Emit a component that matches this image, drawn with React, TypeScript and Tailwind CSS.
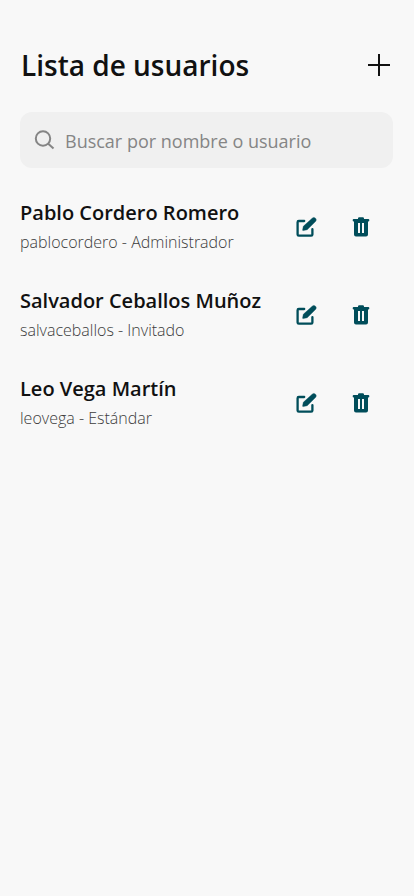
import React, { useState } from "react";

type User = { name: string; username: string; role: string };

const users: User[] = [
  { name: "Pablo Cordero Romero", username: "pablocordero", role: "Administrador" },
  { name: "Salvador Ceballos Muñoz", username: "salvaceballos", role: "Invitado" },
  { name: "Leo Vega Martín", username: "leovega", role: "Estándar" },
];

function EditIcon() {
  return (
    <svg viewBox="0 0 24 24" className="size-6" fill="none" stroke="currentColor" aria-hidden="true">
      <path d="M10.200 6H4.800a1.200 1.200 0 0 0-1.200 1.200v12.200a1.200 1.200 0 0 0 1.200 1.200h12.400a1.200 1.200 0 0 0 1.200-1.200v-5.200" strokeWidth="2.3" strokeLinecap="round" strokeLinejoin="round" />
      <path d="M18.200 3.200a2.400 2.400 0 0 1 3.300 0 2.300 2.300 0 0 1 0 3.300l-8.300 8.200-3.900.9c-.4.100-.8-.3-.7-.7l.7-3.600z" fill="currentColor" stroke="currentColor" strokeWidth=".4" />
    </svg>
  );
}

function TrashIcon() {
  return (
    <svg viewBox="0 0 24 24" className="size-6" fill="currentColor" aria-hidden="true">
      <path fillRule="evenodd" d="M9 4V3.500C9 2.700 9.700 2.200 10.500 2.200h3c.8 0 1.500.500 1.500 1.300V4h4.300a1 1 0 0 1 1 1v.500a1 1 0 0 1-1 1H19v13a2 2 0 0 1-2 2H7a2 2 0 0 1-2-2v-13h-.3a1 1 0 0 1-1-1V5a1 1 0 0 1 1-1zM9 8v10h2V8zM13 8v10h2V8z" />
    </svg>
  );
}

export default function App() {
  const [query, setQuery] = useState("");
  const shown = users.filter((u) => `${u.name} ${u.username}`.toLowerCase().includes(query.toLowerCase()));
  return (
    <main className="min-h-screen bg-[#f8f8f8] pt-11 pr-[21px] pl-5 font-['Open_Sans',sans-serif] text-[#111111]">
      <header className="flex items-center justify-between pl-px">
        <h1 className="text-[28px] leading-[42px] font-semibold">Lista de usuarios</h1>
        <button type="button" aria-label="Añadir usuario">
          <svg viewBox="0 0 28 28" className="size-7" fill="none" stroke="currentColor" strokeWidth="2" aria-hidden="true">
            <path d="M14 3v22M3 14h22" />
          </svg>
        </button>
      </header>
      <label className="mt-[26px] flex h-14 items-center gap-[9px] rounded-xl bg-[#f0f0f0] px-3">
        <svg viewBox="0 0 24 24" className="size-6 shrink-0 text-[#858585]" fill="none" stroke="currentColor" strokeWidth="2" aria-hidden="true">
          <circle cx="11" cy="10.500" r="7.200" />
          <path d="m16 15.500 5.500 5" />
        </svg>
        <input
          type="search"
          aria-label="Buscar por nombre o usuario"
          placeholder="Buscar por nombre o usuario"
          value={query}
          onChange={(e) => setQuery(e.target.value)}
          className="min-w-0 flex-1 bg-transparent pt-px text-lg outline-none placeholder:text-[#858585]"
        />
      </label>
      <ul className="mt-7 flex flex-col gap-7">
        {shown.map((u) => (
          <li key={u.username} className="flex h-15 items-start justify-between">
            <div>
              <h2 className="text-xl leading-[34px] font-semibold">{u.name}</h2>
              <p className="text-base leading-6 font-light text-[#3c3c3c]">{u.username} - {u.role}</p>
            </div>
            <div className="mt-[19px] mr-5 flex gap-[31px] text-[#004d5a]">
              <button type="button" aria-label={`Editar ${u.name}`}><EditIcon /></button>
              <button type="button" aria-label={`Eliminar ${u.name}`}><TrashIcon /></button>
            </div>
          </li>
        ))}
      </ul>
    </main>
  );
}
